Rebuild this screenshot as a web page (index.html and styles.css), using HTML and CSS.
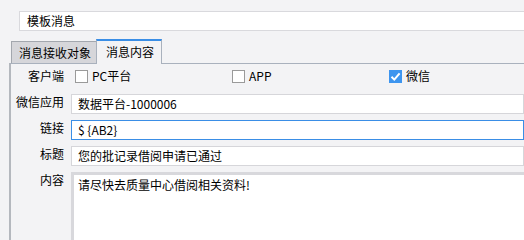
FILE: index.html
```html
<!DOCTYPE html>
<html lang="zh">
<head>
<meta charset="utf-8">
<title>模板消息</title>
<link rel="stylesheet" href="styles.css">
</head>
<body>
<div class="page">
  <div class="title-field">模板消息</div>
  <div class="tabs">
    <div class="tab">消息接收对象</div>
    <div class="tab active">消息内容</div>
  </div>
  <div class="panel">
    <div class="lbl lbl-mid">客户端</div>
    <div class="checks">
      <div class="check"><span class="box"></span><span class="check-text">PC平台</span></div>
      <div class="check"><span class="box"></span><span class="check-text">APP</span></div>
      <div class="check"><span class="box checked"><svg viewBox="0 0 13 13" width="13" height="13"><path d="M2.5 6.8 L5.3 9.6 L10.6 3.4" fill="none" stroke="#fff" stroke-width="2"/></svg></span><span class="check-text">微信</span></div>
    </div>
    <div class="lbl">微信应用</div>
    <div class="field">数据平台-1000006</div>
    <div class="lbl">链接</div>
    <div class="field focus">$ {AB2}</div>
    <div class="lbl">标题</div>
    <div class="field">您的批记录借阅申请已通过</div>
    <div class="lbl">内容</div>
    <div class="area">请尽快去质量中心借阅相关资料!</div>
  </div>
</div>
</body>
</html>
```

FILE: styles.css
```css
html, body {
  margin: 0;
  padding: 0;
  background: #f3f3f5;
  overflow: hidden;
}
body {
  width: 524px;
  height: 240px;
  font-family: "Noto Sans CJK SC", "Noto Sans", sans-serif;
  font-size: 12px;
  color: #000;
}
.page {
  padding-top: 11px;
}
.title-field {
  margin-left: 19px;
  margin-right: -4px;
  height: 18px;
  line-height: 18px;
  border: 1px solid #d9d9dd;
  background: #fff;
  padding-left: 7px;
}
.tabs {
  display: flex;
  align-items: flex-end;
  margin-top: 8px;
  padding-left: 11px;
  height: 24px;
}
.tab {
  height: 22px;
  line-height: 22px;
  box-sizing: border-box;
  border: 1px solid #a3a7ae;
  border-bottom: none;
  background: #d6d6da;
  padding: 0 7px 0 7px;
  width: 86px;
  font-size: 12px;
  white-space: nowrap;
}
.tab.active {
  height: 25px;
  width: 66px;
  margin-left: -1px;
  margin-bottom: -1px;
  line-height: 21px;
  background: #f3f3f5;
  border-color: #a9b1bd;
  border-top: 2px solid #3a8ee6;
  padding: 0 8px 0 9px;
  position: relative;
  z-index: 1;
}
.panel {
  margin-left: 9px;
  border-top: 1px solid #a9b1bd;
  border-left: 2px solid #b4b8be;
  display: grid;
  grid-template-columns: 53px 1fr;
  grid-template-rows: 24px 20px 20px 20px 1fr;
  column-gap: 7px;
  row-gap: 6px;
  height: 176px;
}
.lbl {
  text-align: right;
  line-height: 16px;
  align-self: start;
  white-space: nowrap;
}
.lbl-mid {
  align-self: center;
}
.checks {
  display: grid;
  grid-template-columns: 157px 157px 1fr;
  align-items: center;
  padding-left: 4px;
}
.check {
  display: flex;
  align-items: center;
  gap: 4px;
}
.box {
  width: 13px;
  height: 13px;
  box-sizing: border-box;
  border: 1px solid #9a9a9a;
  background: #fff;
  display: block;
}
.box.checked {
  border: none;
  background: #3d95ef;
}
.box svg {
  display: block;
}
.check-text {
  line-height: 16px;
}
.field {
  height: 18px;
  line-height: 18px;
  border: 1px solid #d6d6da;
  background: #fff;
  padding-left: 6px;
  white-space: nowrap;
}
.field.focus {
  border-color: #3a8ee6;
}
.area {
  border-top: 3px solid #d8d8dc;
  border-left: 3px solid #d8d8dc;
  background: #fff;
  padding: 1px 4px;
  line-height: 18px;
}
```
